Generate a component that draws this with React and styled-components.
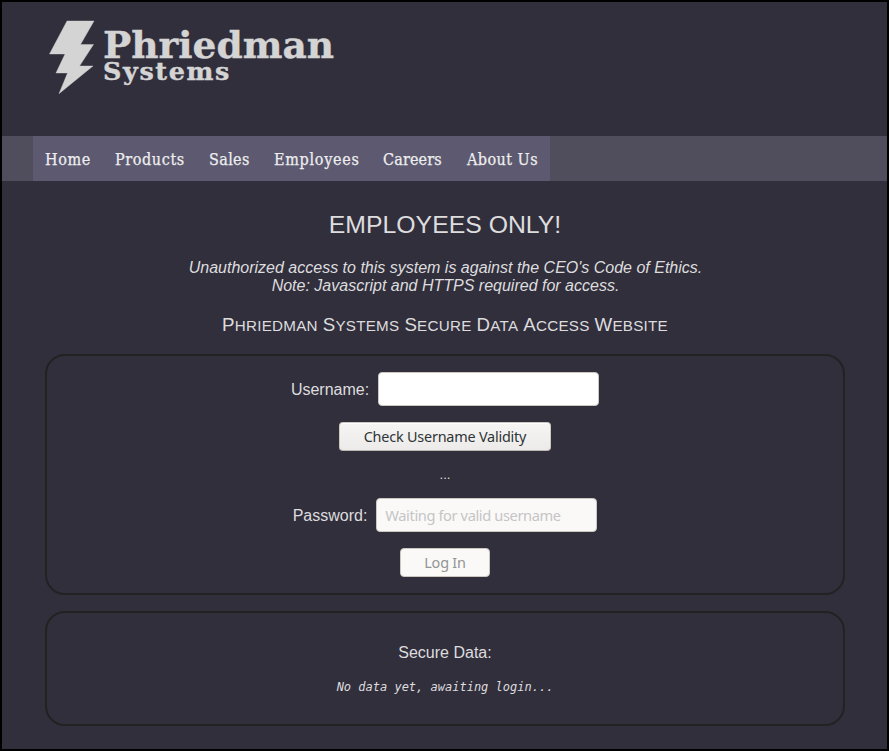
import React from "react";
import styled, { createGlobalStyle } from "styled-components";

const GlobalStyle = createGlobalStyle`
  *, *::before, *::after { box-sizing: border-box; }
  body { margin: 0; background: #000; }
`;

const Page = styled.div`
  display: flex;
  flex-direction: column;
  width: 889px;
  height: 751px;
  border: 2px solid #000;
  background: #322f3d;
  color: #ddd;
  font: 16px/18px "Liberation Sans", Arial, sans-serif;
  overflow: hidden;
`;

const Header = styled.header`
  height: 134px;
  flex: none;
  padding: 14px 0 0 42px;
`;

const Logo = styled.svg`
  display: block;
  font-family: "DejaVu Serif", serif;
  font-weight: bold;
  fill: #d4d4d4;
  stroke: #d4d4d4;
  stroke-width: 0.4px;
`;

const Nav = styled.nav`
  display: flex;
  flex: none;
  height: 45px;
  padding-left: 31px;
  background: #504e5d;
`;

const NavLink = styled.a`
  flex: none;
  width: ${(p) => p.$width}px;
  height: 45px;
  background: #5c5970;
  color: #eee;
  font: 16px/47px "DejaVu Serif Condensed", "DejaVu Serif", serif;
  font-stretch: condensed;
  letter-spacing: ${(p) => p.$spacing}px;
  text-indent: 12px;
  text-decoration: none;
  white-space: nowrap;
  -webkit-text-stroke: 0.25px #eee;
`;

const Main = styled.main`
  display: flex;
  flex-direction: column;
  align-items: center;
  padding: 30px 42px 0 43px;
  text-align: center;
`;

const Title = styled.h1`
  margin: 0;
  font-size: 24.8px;
  line-height: 28px;
  font-weight: normal;
  text-transform: uppercase;
`;

const Notice = styled.p`
  margin: 20px 0 0 1px;
  font-style: italic;
`;

const Subtitle = styled.h2`
  display: flex;
  justify-content: space-between;
  width: 446px;
  margin: 19px 0 0;
  font-size: 15.2px;
  line-height: 22px;
  font-weight: normal;
  letter-spacing: 0.25px;
  text-transform: uppercase;
`;

const SmallCapsWord = styled.span`
  &::first-letter { font-size: 18.72px; }
`;

const Panel = styled.section`
  display: flex;
  flex-direction: column;
  align-items: center;
  width: 800px;
  height: ${(p) => p.$height}px;
  margin-top: ${(p) => p.$gap}px;
  padding-top: 16px;
  border: 2px solid #222;
  border-radius: 20px;
`;

const Field = styled.label`
  display: flex;
  align-items: center;
  gap: 9px;
  line-height: 20px;
`;

const Caption = styled.span`
  padding-top: 2px;
`;

const Input = styled.input`
  width: 221px;
  height: 34px;
  padding: 0 8px;
  border: 1px solid #cdc7c2;
  border-radius: 4px;
  background: #fff;
  color: #2e3436;
  font: 14.67px "Noto Sans", sans-serif;
  letter-spacing: -0.4px;
  &:disabled { background: #faf9f8; }
  &::placeholder { color: #c5c5c5; opacity: 1; }
`;

const Button = styled.button`
  width: ${(p) => p.$width}px;
  height: 29px;
  margin: 16px 0;
  padding: 0;
  border: 1px solid #cdc7c2;
  border-bottom-color: #bfb8b1;
  border-radius: 4px;
  background: linear-gradient(#f6f5f4, #edebe9);
  box-shadow: inset 0 1px #fff;
  color: #2e3436;
  font: 14.4px/25px "Noto Sans", sans-serif;
  letter-spacing: -0.2px;
  &:disabled {
    border-color: #cdc7c2;
    background: #faf9f8;
    box-shadow: none;
    color: #929595;
  }
`;

const Status = styled.div`
  height: 31px;
  font-size: 13.33px;
  line-height: 15px;
`;

const DataLabel = styled.p`
  margin: 15px 0 0;
`;

const DataText = styled.pre`
  margin: 18px 0 0;
  font: italic 12px/15px "DejaVu Sans Mono", monospace;
`;

const links = [
  ["Home", 70, 0.6],
  ["Products", 94, 0.6],
  ["Sales", 65, 0.35],
  ["Employees", 109, 0.7],
  ["Careers", 84, 0.15],
  ["About Us", 95, 0.45],
];

const subtitle = ["Phriedman", "Systems", "Secure", "Data", "Access", "Website"];

export default function App() {
  return (
    <>
      <GlobalStyle />
      <Page>
        <Header>
          <Logo width="295" height="84" viewBox="44 16 295 84">
            <path d="M67 21H94L80.5 44.5H93.5L79.5 66H93L59 93.7L67.5 73H56L65 54H49.5Z" />
            <text x="103" y="58.3" fontSize="37" textLength="231" lengthAdjust="spacingAndGlyphs">Phriedman</text>
            <text x="103" y="80.3" fontSize="23.5" letterSpacing="1.5" textLength="128" lengthAdjust="spacingAndGlyphs">Systems</text>
          </Logo>
        </Header>
        <Nav>
          {links.map(([name, width, spacing]) => (
            <NavLink key={name} href="#" $width={width} $spacing={spacing}>{name}</NavLink>
          ))}
        </Nav>
        <Main>
          <Title>Employees Only!</Title>
          <Notice>
            Unauthorized access to this system is against the CEO's Code of Ethics.<br />
            Note: Javascript and HTTPS required for access.
          </Notice>
          <Subtitle>
            {subtitle.map((word) => <SmallCapsWord key={word}>{word} </SmallCapsWord>)}
          </Subtitle>
          <Panel $height={241} $gap={17}>
            <Field><Caption>Username:</Caption><Input type="text" /></Field>
            <Button $width={212}>Check Username Validity</Button>
            <Status>...</Status>
            <Field><Caption>Password:</Caption><Input type="password" placeholder="Waiting for valid username" disabled /></Field>
            <Button $width={90} disabled>Log In</Button>
          </Panel>
          <Panel $height={115} $gap={16}>
            <DataLabel>Secure Data:</DataLabel>
            <DataText>No data yet, awaiting login...</DataText>
          </Panel>
        </Main>
      </Page>
    </>
  );
}
